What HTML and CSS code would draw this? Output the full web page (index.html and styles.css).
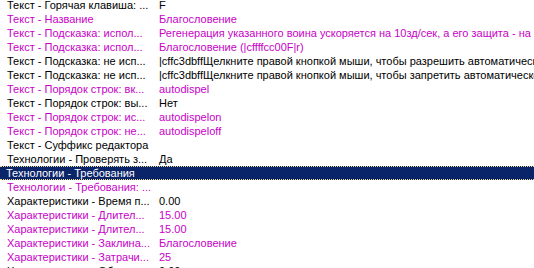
FILE: index.html
```
<!DOCTYPE html>
<html>
<head>
<meta charset="utf-8">
<link rel="stylesheet" href="styles.css">
</head>
<body>
<div class="list">
  <div class="row"><span class="name">Текст - Горячая клавиша: ...</span><span class="val">F</span></div>
  <div class="row mod"><span class="name">Текст - Название</span><span class="val">Благословение</span></div>
  <div class="row mod"><span class="name">Текст - Подсказка: испол...</span><span class="val">Регенерация указанного воина ускоряется на 10зд/сек, а его защита - на 5 единиц</span></div>
  <div class="row mod"><span class="name">Текст - Подсказка: испол...</span><span class="val">Благословение (|cffffcc00F|r)</span></div>
  <div class="row"><span class="name">Текст - Подсказка: не исп...</span><span class="val">|cffc3dbffЩелкните правой кнопкой мыши, чтобы разрешить автоматическое применение</span></div>
  <div class="row"><span class="name">Текст - Подсказка: не исп...</span><span class="val">|cffc3dbffЩелкните правой кнопкой мыши, чтобы запретить автоматическое применение</span></div>
  <div class="row mod"><span class="name">Текст - Порядок строк: вк...</span><span class="val">autodispel</span></div>
  <div class="row"><span class="name">Текст - Порядок строк: вы...</span><span class="val">Нет</span></div>
  <div class="row mod"><span class="name">Текст - Порядок строк: ис...</span><span class="val">autodispelon</span></div>
  <div class="row mod"><span class="name">Текст - Порядок строк: не...</span><span class="val">autodispeloff</span></div>
  <div class="row"><span class="name">Текст - Суффикс редактора</span><span class="val"></span></div>
  <div class="row"><span class="name">Технологии - Проверять з...</span><span class="val">Да</span></div>
  <div class="row sel"><span class="name">Технологии - Требования</span><span class="val"></span></div>
  <div class="row mod"><span class="name">Технологии - Требования: ...</span><span class="val"></span></div>
  <div class="row"><span class="name">Характеристики - Время п...</span><span class="val">0.00</span></div>
  <div class="row mod"><span class="name">Характеристики - Длител...</span><span class="val">15.00</span></div>
  <div class="row mod"><span class="name">Характеристики - Длител...</span><span class="val">15.00</span></div>
  <div class="row mod"><span class="name">Характеристики - Заклина...</span><span class="val">Благословение</span></div>
  <div class="row mod"><span class="name">Характеристики - Затрачи...</span><span class="val">25</span></div>
  <div class="row"><span class="name">Характеристики - Об...</span><span class="val">0.00</span></div>
</div>
</body>
</html>
```
FILE: styles.css
```
html, body {
  margin: 0;
  padding: 0;
  background: #ffffff;
  overflow: hidden;
}
body {
  width: 534px;
  height: 268px;
  font-family: "Liberation Sans", Arial, sans-serif;
  font-size: 11px;
  color: #000000;
}
.list {
  margin-top: -2px;
  display: flex;
  flex-direction: column;
}
.row {
  display: grid;
  grid-template-columns: 154px 1fr;
  height: 14px;
  line-height: 14px;
  white-space: nowrap;
  overflow: hidden;
}
.name {
  padding-left: 7px;
  overflow: hidden;
}
.val {
  padding-left: 5px;
  overflow: hidden;
}
.mod {
  color: #c800c8;
}
.sel {
  background: #0a246a;
  color: #ffffff;
  box-sizing: border-box;
  border-top: 1px dotted #f0d890;
  border-bottom: 1px dotted #f0d890;
  line-height: 12px;
}
.sel .name {
  padding-left: 6px;
}
```
